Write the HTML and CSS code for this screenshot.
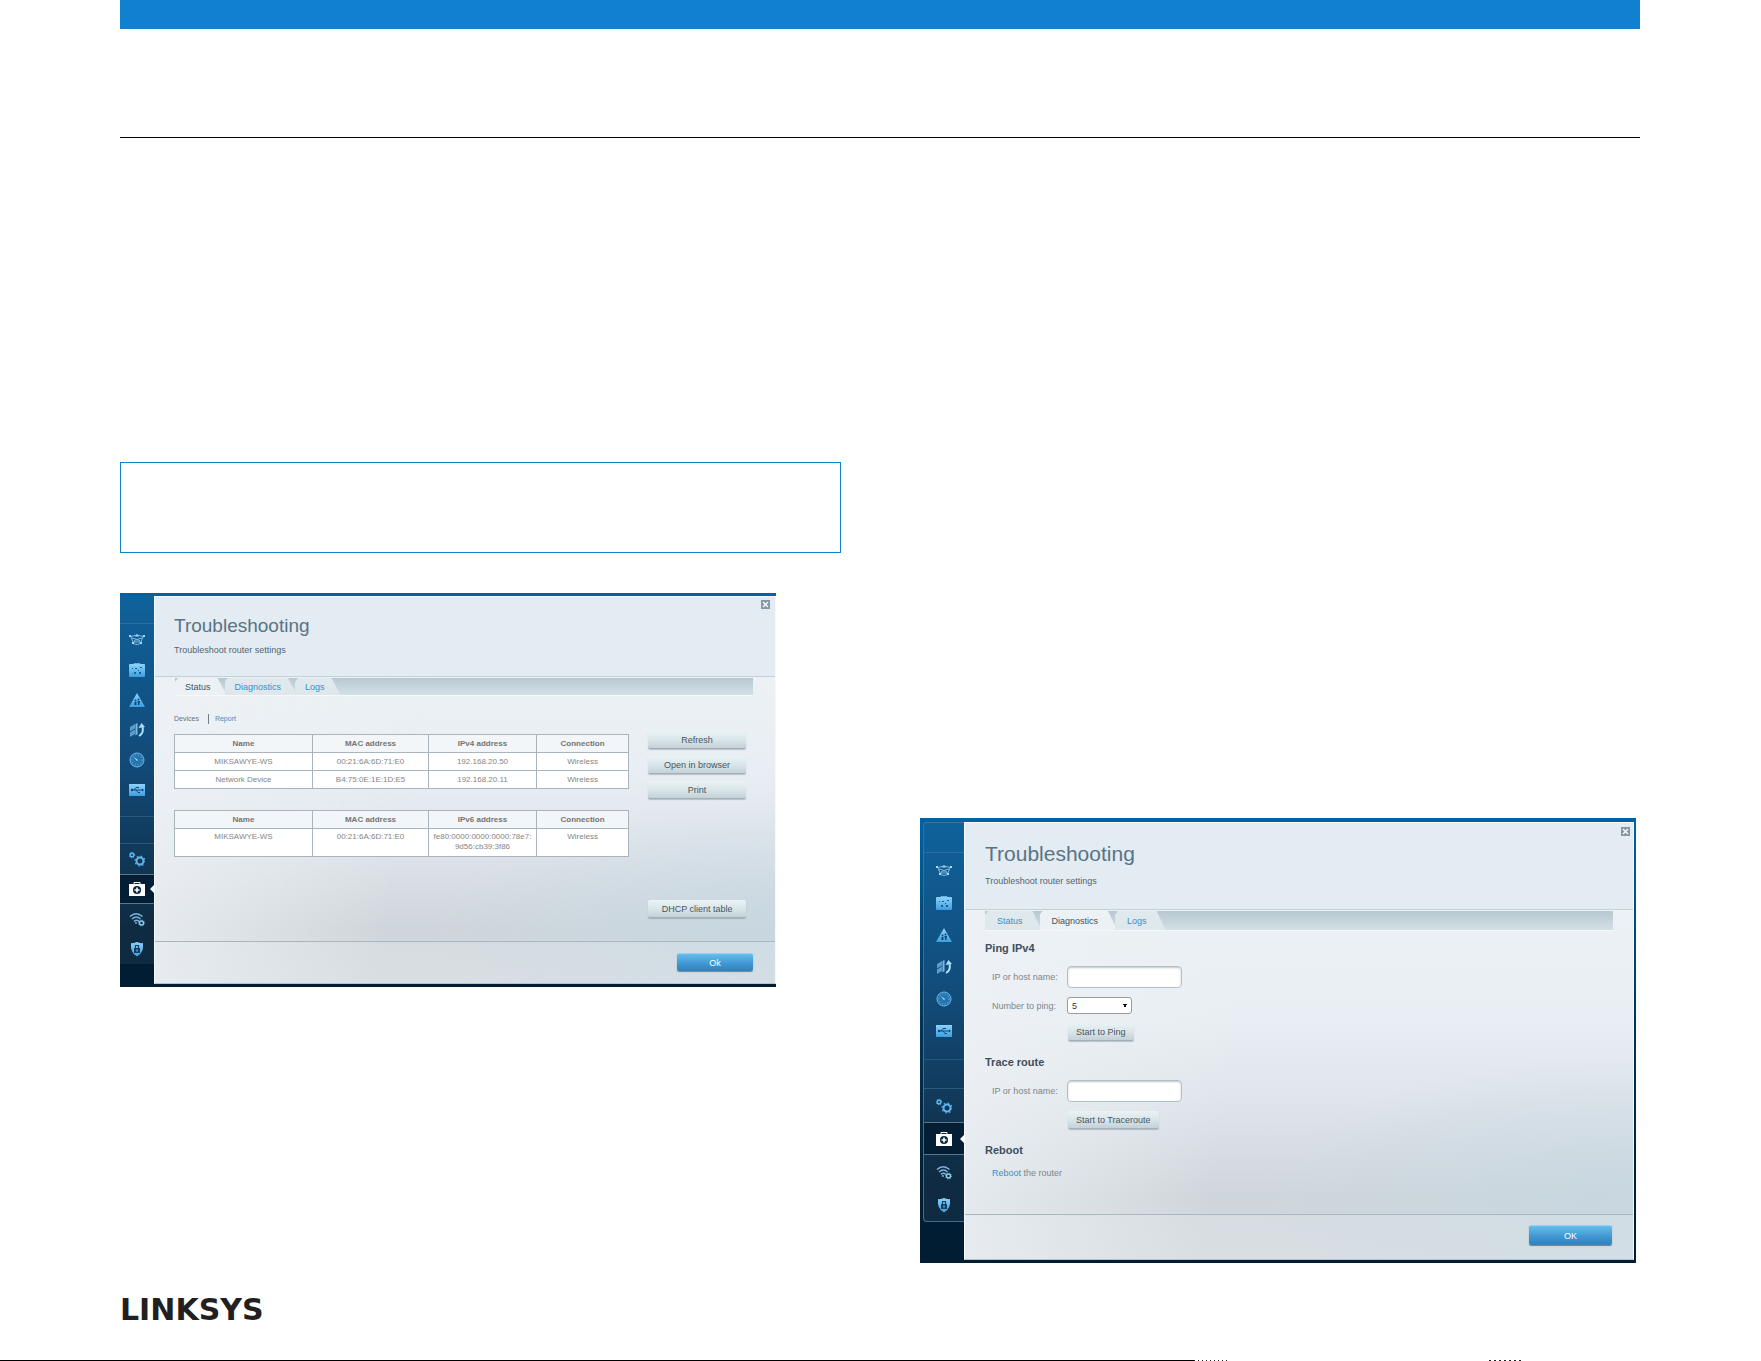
FILE: index.html
```
<!DOCTYPE html>
<html lang="en">
<head>
    <meta charset="UTF-8">
    <meta name="viewport" content="width=device-width, initial-scale=1.0">
    <title>Linksys - Troubleshooting</title>
    <link rel="stylesheet" href="styles.css">
</head>
<body>

    <!-- Shared icons -->
    <svg class="defs" width="0" height="0" aria-hidden="true">
        <defs>
            <linearGradient id="ice" x1="0" y1="0" x2="0" y2="1">
                <stop offset="0" stop-color="#8cd2fb"/>
                <stop offset="1" stop-color="#3c9ee0"/>
            </linearGradient>
        </defs>
        <symbol id="i-map" viewBox="0 0 16 16">
            <g fill="none" stroke="#7fb9e0" stroke-width="1">
                <path d="M2 4.500Q8 1.500 14 4.500M2 5L4.500 11M14 5L11.500 11M3 6Q8 9 13 6M4 11.500Q8 13.500 12 11.500"/>
                <path d="M5 10h6l-1-2H6z"/>
            </g>
            <g fill="#a8d8f5"><rect x="0" y="3" width="2" height="2"/><rect x="14" y="3" width="2" height="2"/><path d="M6 4.500L8 2l2 2.500z"/><rect x="3" y="10" width="2" height="2"/><rect x="11" y="10" width="2" height="2"/></g>
        </symbol>
        <symbol id="i-case" viewBox="0 0 16 16">
            <path d="M5 3V1.500h6V3" fill="none" stroke="#5fb4ee"/>
            <rect y="2" width="16" height="13" rx="1" fill="url(#ice)"/>
            <g fill="#1d5e95"><rect x="3" y="6" width="1" height="1"/><rect x="6" y="6" width="2" height="1"/><rect x="11" y="5" width="2" height="1"/><rect x="9" y="8" width="1" height="1"/><rect x="5" y="10" width="2" height="2"/><rect x="10" y="10" width="2" height="2"/></g>
        </symbol>
        <symbol id="i-parental" viewBox="0 0 16 16">
            <path d="M8 1l8 14H0z" fill="url(#ice)"/>
            <g fill="#10487c"><circle cx="6.500" cy="8.500" r="1"/><path d="M5.500 10h2v3h-2z"/><circle cx="9.500" cy="7.500" r="1"/><path d="M8.500 9h2.500v1.500h-.5V13H9v-2.500h-.5z"/></g>
        </symbol>
        <symbol id="i-media" viewBox="0 0 16 16">
            <path d="M1 5l5-3v4.500L1 9.500zM1 10.500l5-3V12l-5 3z" fill="#5d9dca"/>
            <path d="M6.500 2l2-1v11l-2 1.500z" fill="#7db8de"/>
            <path d="M10 14q5-3 3.500-9" fill="none" stroke="#a8dcf8" stroke-width="2"/>
            <path d="M9.500 6L12.500 1l3.500 4z" fill="#a8dcf8"/>
        </symbol>
        <symbol id="i-speed" viewBox="0 0 16 16">
            <circle cx="8" cy="8" r="7" fill="#2675ae" stroke="#6ab9ec"/>
            <circle cx="8" cy="8" r="5" fill="none" stroke="#6fb5e0" stroke-dasharray="1 2"/>
            <path d="M4.500 5l4.500 3-1 1z" fill="#c4e8fc"/>
        </symbol>
        <symbol id="i-usb" viewBox="0 0 16 16">
            <rect y="2" width="16" height="12" fill="url(#ice)"/>
            <path d="M2 8h12M5 8l2-2.500h3M7 8l2 2.500h2" fill="none" stroke="#12456f"/>
            <circle cx="3" cy="8" r="1.200" fill="#12456f"/><path d="M13 6.500L15 8l-2 1.500z" fill="#12456f"/>
        </symbol>
        <symbol id="i-gears" viewBox="0 0 16 16">
            <circle cx="3" cy="4" r="1.800" fill="none" stroke="#5fb4ec" stroke-width="1.500"/>
            <circle cx="3" cy="4" r="2.800" fill="none" stroke="#5fb4ec" stroke-dasharray="1 1.200"/>
            <circle cx="11" cy="10" r="3.500" fill="none" stroke="#5fb4ec" stroke-width="2"/>
            <circle cx="11" cy="10" r="5" fill="none" stroke="#5fb4ec" stroke-width="1.200" stroke-dasharray="1.600 2.330"/>
        </symbol>
        <symbol id="i-kit" viewBox="0 0 16 16">
            <path d="M5 3V1.500h6V3" fill="none" stroke="#fff"/>
            <rect y="3" width="16" height="12" fill="#fff"/>
            <circle cx="8" cy="9" r="4" fill="#08263c"/>
            <path d="M8 6.500v5M5.500 9h5" stroke="#fff" stroke-width="1.600"/>
        </symbol>
        <symbol id="i-wifi" viewBox="0 0 16 16">
            <path d="M1 5.500Q7 0 13.500 5.500M3 8q4.500-4 8.500 0M5 10.500q2.500-2.500 5 0" fill="none" stroke="#7cb4da" stroke-width="1.500"/>
            <circle cx="7" cy="12" r="1" fill="#7cb4da"/>
            <circle cx="12.500" cy="12" r="2" fill="none" stroke="#8ac9f2" stroke-width="1.500"/>
            <circle cx="12.500" cy="12" r="3" fill="none" stroke="#8ac9f2" stroke-width=".8" stroke-dasharray="1 1.350"/>
        </symbol>
        <symbol id="i-shield" viewBox="0 0 16 16">
            <path d="M2 2q3 .5 6-1 3 1.500 6 1 1 10-6 13.500Q1 12 2 2z" fill="url(#ice)"/>
            <rect x="5" y="7" width="6" height="5" fill="#163f5f"/>
            <path d="M6.500 7V4.500h3V7" fill="none" stroke="#163f5f" stroke-width="1.200"/>
            <path d="M8 8.500v2" stroke="#8cd2fb"/>
        </symbol>
        <symbol id="i-close" viewBox="0 0 9 9">
            <rect width="9" height="9" fill="#8497a4"/>
            <path d="M2 2l5 5M7 2L2 7" stroke="#f4f8fa" stroke-width="1.500"/>
        </symbol>
    </svg>

    <div class="page">
        <header class="page-header"></header>

        <main class="columns">
            <section class="column">
                <div class="note"></div>

                <!-- Status tab -->
                <div class="screen screen-status">
                    <nav class="sidebar" aria-label="Status menu">
                        <div class="side-top"></div>
                        <ul class="side-apps">
                            <li><svg><use href="#i-map"/></svg></li>
                            <li><svg><use href="#i-case"/></svg></li>
                            <li><svg><use href="#i-parental"/></svg></li>
                            <li><svg><use href="#i-media"/></svg></li>
                            <li><svg><use href="#i-speed"/></svg></li>
                            <li><svg><use href="#i-usb"/></svg></li>
                        </ul>
                        <ul class="side-settings">
                            <li><svg><use href="#i-gears"/></svg></li>
                            <li class="current"><svg><use href="#i-kit"/></svg></li>
                            <li><svg><use href="#i-wifi"/></svg></li>
                            <li><svg><use href="#i-shield"/></svg></li>
                        </ul>
                    </nav>
                    <div class="panel">
                        <div class="panel-head">
                            <div>
                                <h2>Troubleshooting</h2>
                                <p>Troubleshoot router settings</p>
                            </div>
                            <button class="close" aria-label="Close"><svg><use href="#i-close"/></svg></button>
                        </div>
                        <div class="tabs">
                            <a href="#" class="tab active">Status</a>
                            <a href="#" class="tab">Diagnostics</a>
                            <a href="#" class="tab">Logs</a>
                        </div>
                        <div class="status-body">
                            <div class="tables">
                                <div class="views"><span>Devices</span><a href="#">Report</a></div>
                                <table>
                                    <colgroup><col class="c-name"><col class="c-mac"><col class="c-ip"><col></colgroup>
                                    <tr><th>Name</th><th>MAC address</th><th>IPv4 address</th><th>Connection</th></tr>
                                    <tr><td>MIKSAWYE-WS</td><td>00:21:6A:6D:71:E0</td><td>192.168.20.50</td><td>Wireless</td></tr>
                                    <tr><td>Network Device</td><td>B4:75:0E:1E:1D:E5</td><td>192.168.20.11</td><td>Wireless</td></tr>
                                </table>
                                <table>
                                    <colgroup><col class="c-name"><col class="c-mac"><col class="c-ip"><col></colgroup>
                                    <tr><th>Name</th><th>MAC address</th><th>IPv6 address</th><th>Connection</th></tr>
                                    <tr class="tall"><td>MIKSAWYE-WS</td><td>00:21:6A:6D:71:E0</td><td>fe80:0000:0000:0000:78e7:<br>9d56:cb39:3f86</td><td>Wireless</td></tr>
                                </table>
                            </div>
                            <div class="actions">
                                <button class="btn">Refresh</button>
                                <button class="btn">Open in browser</button>
                                <button class="btn">Print</button>
                                <button class="btn last">DHCP client table</button>
                            </div>
                        </div>
                        <div class="panel-foot"><button class="btn-ok">Ok</button></div>
                    </div>
                </div>
            </section>

            <section class="column">
                <!-- Diagnostics tab -->
                <div class="screen screen-diag">
                    <nav class="sidebar" aria-label="Diagnostics menu">
                        <div class="side-top"></div>
                        <ul class="side-apps">
                            <li><svg><use href="#i-map"/></svg></li>
                            <li><svg><use href="#i-case"/></svg></li>
                            <li><svg><use href="#i-parental"/></svg></li>
                            <li><svg><use href="#i-media"/></svg></li>
                            <li><svg><use href="#i-speed"/></svg></li>
                            <li><svg><use href="#i-usb"/></svg></li>
                        </ul>
                        <ul class="side-settings">
                            <li><svg><use href="#i-gears"/></svg></li>
                            <li class="current"><svg><use href="#i-kit"/></svg></li>
                            <li><svg><use href="#i-wifi"/></svg></li>
                            <li><svg><use href="#i-shield"/></svg></li>
                        </ul>
                    </nav>
                    <div class="panel">
                        <div class="panel-head">
                            <div>
                                <h2>Troubleshooting</h2>
                                <p>Troubleshoot router settings</p>
                            </div>
                            <button class="close" aria-label="Close"><svg><use href="#i-close"/></svg></button>
                        </div>
                        <div class="tabs">
                            <a href="#" class="tab">Status</a>
                            <a href="#" class="tab active">Diagnostics</a>
                            <a href="#" class="tab">Logs</a>
                        </div>
                        <form class="diag-body">
                            <h3>Ping IPv4</h3>
                            <div class="fields">
                                <label for="ping-host">IP or host name:</label>
                                <input type="text" id="ping-host">
                                <label for="ping-count">Number to ping:</label>
                                <select id="ping-count"><option>5</option><option>10</option><option>15</option></select>
                                <button type="button" class="btn">Start to Ping</button>
                            </div>
                            <h3>Trace route</h3>
                            <div class="fields">
                                <label for="trace-host">IP or host name:</label>
                                <input type="text" id="trace-host">
                                <button type="button" class="btn">Start to Traceroute</button>
                            </div>
                            <h3>Reboot</h3>
                            <p class="reboot"><a href="#">Reboot</a> the router</p>
                        </form>
                        <div class="panel-foot"><button class="btn-ok">OK</button></div>
                    </div>
                </div>
            </section>
        </main>

        <footer class="page-footer">
            <div class="logo">LINKSYS</div>
            <div class="edge"></div>
        </footer>
    </div>

</body>
</html>
```
FILE: styles.css
```
* {
    box-sizing: border-box;
}

body {
    margin: 0;
    background: #fff;
    font-family: "Liberation Sans", Arial, sans-serif;
}

a {
    color: #3b8fc6;
    text-decoration: none;
}

ul, h2, h3, p {
    margin: 0;
    padding: 0;
    list-style: none;
}

.defs {
    position: absolute;
}

.page {
    min-height: 100vh;
    display: flex;
    flex-direction: column;
}

.page-header {
    margin: 0 121px 0 120px;
    height: 138px;
    border-top: 29px solid #1181cf;
    border-bottom: 1px solid #000;
}

/* Two columns of the manual page */
.columns {
    display: grid;
    grid-template-columns: 1fr 1fr;
    gap: 78px;
    margin: 0 121px 0 120px;
}

.note {
    height: 91px;
    margin: 324px 0 40px;
    border: 1px solid #1181c8;
}

/* Router admin window */
.screen {
    display: flex;
    background: linear-gradient(#0063a5, #00345a 45%, #001d33 85%);
    padding: 3px 0;
}

.screen-status {
    width: 91%;
}

.screen-diag {
    margin: 680px 4px 0 1px;
    padding: 4px 2px 3px 3px;
}

.sidebar {
    width: 34px;
    flex: none;
    background: linear-gradient(#0f629b, #124a78 45%, #0f2b41 90%);
    align-self: flex-start;
}

.screen-diag .sidebar {
    width: 41px;
    border: 1px solid #3f7092;
    border-width: 1px 0 1px 1px;
    border-radius: 4px 0 0 4px;
}

.side-top {
    height: 28px;
    border-bottom: 1px solid #2b6d9c;
}

.side-apps {
    padding: 1px 0 11px;
    border-bottom: 1px solid #2a587b;
}

.side-settings {
    margin-top: 26px;
    border-top: 1px solid #2a587b;
}

.sidebar li {
    height: 30px;
    display: flex;
    align-items: center;
    justify-content: center;
    position: relative;
}

.sidebar svg {
    width: 16px;
    height: 16px;
}

.sidebar .current {
    background: #041f35;
    border: 1px solid #5d7585;
    border-width: 1px 0;
}

/* Arrow on the selected menu item */
.current::after {
    content: "";
    position: absolute;
    right: 0;
    border: 4px solid transparent;
    border-right-color: #fff;
    border-left: 0;
}

.screen-diag .side-top {
    height: 30px;
}

.screen-diag .side-apps {
    padding: 2px 0 12px;
}

.screen-diag .side-apps li {
    height: 32px;
}

.screen-diag .side-settings {
    margin-top: 28px;
}

.screen-diag .side-settings li {
    height: 33px;
}

.panel {
    flex: 1;
    display: flex;
    flex-direction: column;
    border: 1px solid #f5f9fb;
    border-bottom-color: #b5c2cb;
    background:
        linear-gradient(100deg, rgba(237, 241, 245, 0.9), rgba(237, 241, 245, 0) 42%),
        radial-gradient(ellipse 55% 35% at 100% 88%, rgba(196, 215, 226, 0.7), rgba(196, 215, 226, 0)),
        linear-gradient(#ebf1f4 20%, #e8eef3 45%, #dfe5eb 63%, #cfd6db 86%, #d3d9dd);
}

.panel-head {
    display: flex;
    justify-content: space-between;
    height: 80px;
    padding: 19px 5px 0 19px;
    background: #e3ebf3;
    border-bottom: 1px solid #c3d0d6;
}

.panel-head h2 {
    font-size: 19px;
    line-height: 20px;
    font-weight: normal;
    color: #597484;
}

.panel-head p {
    margin-top: 8px;
    font-size: 9px;
    line-height: 12px;
    color: #566670;
}

.close {
    align-self: flex-start;
    display: block;
    margin-top: -16px;
    padding: 0;
    border: 0;
    background: none;
}

.close svg {
    display: block;
    width: 9px;
    height: 9px;
}

/* Tabs */
.tabs {
    display: flex;
    height: 18px;
    margin: 1px 22px 0 20px;
    background: linear-gradient(#b7c8d0, #d3e0e6);
    border-bottom: 1px solid #f5f8fa;
}

.tab {
    margin-right: -2px;
    padding: 0 16px 0 10px;
    font-size: 9px;
    line-height: 18px;
    background: linear-gradient(#dfe9ee, #dde7ec);
    clip-path: polygon(0 4px, 3px 0, calc(100% - 9px) 0, 100% 100%, 0 100%);
}

.tab.active {
    color: #47535c;
    background: #ebf1f4;
}

.status-body {
    display: flex;
    padding: 18px 29px 23px 19px;
    gap: 19px;
}

.tables {
    flex: 1;
}

.views {
    display: flex;
    margin-bottom: 10px;
    font-size: 7px;
    line-height: 10px;
    color: #5e7684;
}

.views a {
    margin-left: 9px;
    padding-left: 6px;
    border-left: 1px solid #6d7e88;
}

table {
    width: 100%;
    table-layout: fixed;
    border-collapse: collapse;
    margin-bottom: 21px;
    font-size: 8px;
    line-height: 10px;
    text-align: center;
    color: #858585;
    background: #fff;
}

.c-name { width: 138px; }
.c-mac { width: 116px; }
.c-ip { width: 108px; }

th, td {
    height: 18px;
    padding: 0;
    border: 1px solid #a9b4bd;
}

th {
    color: #747474;
    background: #f2f6f9;
}

.tall td {
    height: 28px;
    padding-top: 3px;
    vertical-align: top;
}

.actions {
    display: flex;
    flex-direction: column;
    gap: 7px;
    width: 98px;
    padding-top: 17px;
}

.actions .last {
    margin-top: 94px;
}

.btn {
    height: 18px;
    padding: 0 8px;
    font: 9px "Liberation Sans", Arial, sans-serif;
    color: #47565f;
    background: linear-gradient(#eaf3f5, #d9e6ea 50%, #c4d2d8);
    border: 0;
    border-bottom: 1px solid #a3b0b8;
    border-radius: 2px;
    box-shadow: 0 1px 1px rgba(70, 90, 105, 0.3);
}

.panel-foot {
    height: 42px;
    margin-top: auto;
    padding: 11px 22px 0;
    border-top: 1px solid #a9b6be;
    background: rgba(240, 245, 248, 0.2);
    text-align: right;
}

.btn-ok {
    width: 76px;
    height: 18px;
    padding: 0;
    font: 9px/16px "Liberation Sans", Arial, sans-serif;
    color: #fff;
    background: linear-gradient(#68bdec, #4197d3 55%, #2f82bb);
    border: 0;
    border-top: 1px solid #8fd2f4;
    border-radius: 2px;
    box-shadow: 0 1px 1px rgba(50, 70, 85, 0.6);
    display: inline-block;
    vertical-align: top;
}

/* Diagnostics window */
.screen-diag .panel-head {
    height: 87px;
    padding: 20px 3px 0 20px;
}

.screen-diag .panel-head h2 {
    font-size: 21px;
    line-height: 22px;
}

.screen-diag .panel-head p {
    margin-top: 10px;
}

.screen-diag .tabs {
    height: 20px;
    margin: 1px 20px 0;
}

.screen-diag .tab {
    margin-right: -2px;
    padding: 0 19px 0 12px;
    line-height: 20px;
}

.diag-body {
    padding: 10px 20px 35px;
}

.diag-body h3 {
    font-size: 11px;
    line-height: 14px;
    color: #3d4f5b;
}

.fields {
    display: grid;
    grid-template-columns: 69px 1fr;
    column-gap: 6px;
    row-gap: 9px;
    align-items: center;
    justify-items: start;
    margin: 11px 0 14px;
    padding-left: 7px;
    font-size: 9px;
    color: #7e868b;
}

.fields input {
    width: 115px;
    height: 22px;
    border: 1px solid #b4c0c7;
    border-radius: 4px;
    box-shadow: inset 0 1px 2px rgba(90, 110, 125, 0.4);
}

.fields select {
    width: 65px;
    height: 17px;
    padding: 0 0 0 4px;
    font: 9px "Liberation Sans", Arial, sans-serif;
    color: #333;
    border: 1px solid #9b9b9b;
    border-radius: 3px;
    appearance: none;
    background:
        linear-gradient(to bottom right, #111 50%, transparent 50%) 57px 6px / 2px 4px no-repeat,
        linear-gradient(to bottom left, #111 50%, transparent 50%) 55px 6px / 2px 4px no-repeat,
        #fff;
}

.fields .btn {
    grid-column: 2;
    margin-left: 1px;
}

.reboot {
    margin-top: 10px;
    padding-left: 7px;
    font-size: 9px;
    line-height: 12px;
    color: #7e868b;
}

.screen-diag .panel-foot {
    height: 45px;
    padding: 10px 21px 0;
}

.screen-diag .btn-ok {
    width: 83px;
    height: 20px;
}

/* Footer */
.page-footer {
    margin-top: auto;
}

.logo {
    margin: 0 120px 33px;
    font: bold 30px/34px "DejaVu Sans", sans-serif;
    color: #231f20;
}

.edge {
    height: 1px;
    background:
        repeating-linear-gradient(90deg, #222 0 2px, #fff 2px 5px) 1489px 0 / 34px 1px no-repeat,
        repeating-linear-gradient(90deg, #222 0 1px, #fff 1px 4px) 1194px 0 / 34px 1px no-repeat,
        linear-gradient(#000, #000) 0 0 / 1194px 1px no-repeat;
}
```
